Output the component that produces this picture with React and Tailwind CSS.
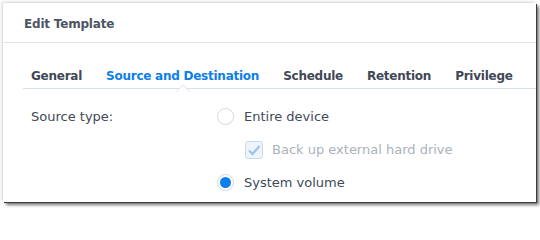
import React from "react";

const font = { fontFamily: '"DejaVu Sans", Verdana, sans-serif' };

function Radio({ checked }) {
  return (
    <span className="flex h-[17px] w-[17px] shrink-0 items-center justify-center rounded-full border border-[#cfd8e1] bg-white">
      {checked && <span className="h-[11px] w-[11px] rounded-full bg-[#0b7ff0]" />}
    </span>
  );
}

function Checkbox() {
  return (
    <span className="flex h-[18px] w-[18px] shrink-0 items-center justify-center rounded-[3px] border border-[#cdd9e5] bg-[#eef4fa]">
      <svg width="14" height="12" viewBox="0 0 14 12">
        <polyline points="2,6.5 5.5,10 12.5,2" fill="none" stroke="#9cc6ef" strokeWidth="2.4" strokeLinejoin="miter" />
      </svg>
    </span>
  );
}

export default function App() {
  const tabs = ["General", "Source and Destination", "Schedule", "Retention", "Privilege"];
  return (
    <div className="h-[208px] w-[540px] overflow-hidden bg-white" style={font}>
      <div className="ml-[3px] mt-[3px] h-[199px] w-[533px] bg-white shadow-[-1px_-1px_3px_rgba(0,0,0,0.18),1px_1px_0_#3c3c3c,3px_3px_3px_rgba(0,0,0,0.55)]">
        <div className="flex h-[40px] items-center border-b border-[#dfe6ee] pl-[21px] pt-[3px]">
          <span className="text-[12px] font-bold leading-[15px] tracking-[-0.2px] text-[#4c5563]">Edit Template</span>
        </div>
        <div className="relative ml-[20px] flex h-[46px] gap-[24px] border-b border-[#d9e1ea] pl-[8px] pt-[20px]">
          {tabs.map((t, i) => (
            <div key={t} className="relative">
              <span className={"text-[12px] font-bold leading-[15px] tracking-[-0.25px] " + (i === 1 ? "text-[#0c80e8]" : "text-[#3f4856]")}>
                {t}
              </span>
              {i === 1 && (
                <svg className="absolute left-1/2 top-[21px] -ml-[7px]" width="14" height="8" viewBox="0 0 14 8">
                  <polygon points="0,7.5 7,1 14,7.5" fill="white" />
                  <polyline points="0,7.5 7,1 14,7.5" fill="none" stroke="#d9e1ea" strokeWidth="1" />
                </svg>
              )}
            </div>
          ))}
        </div>
        <div className="flex pl-[28px] pt-[11px] text-[13px] leading-[16px]">
          <div className="flex h-[33px] w-[186px] items-center text-[#404a58]">Source type:</div>
          <div className="flex flex-col">
            <div className="flex h-[33px] items-center gap-[10px] text-[#404a58]">
              <Radio />
              <span>Entire device</span>
            </div>
            <div className="flex h-[33px] items-center gap-[9px] pl-[28px] text-[#aab2bb]">
              <Checkbox />
              <span>Back up external hard drive</span>
            </div>
            <div className="flex h-[33px] items-center gap-[10px] text-[#404a58]">
              <Radio checked />
              <span>System volume</span>
            </div>
          </div>
        </div>
      </div>
    </div>
  );
}
